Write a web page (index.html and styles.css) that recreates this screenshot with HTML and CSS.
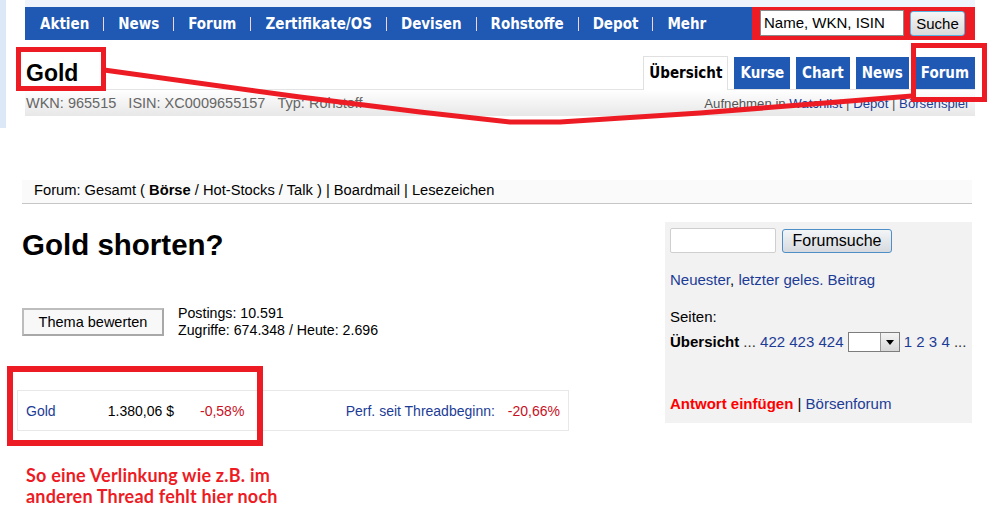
FILE: index.html
```html
<!DOCTYPE html>
<html lang="de">
<head>
<meta charset="utf-8">
<title>Gold shorten? - Forum</title>
<link rel="stylesheet" href="styles.css">
</head>
<body>
<div class="shot">
  <div class="site">
    <div class="topstrip"></div>
    <div class="nav">
      <div class="menu">
        <a>Aktien</a><span class="sep"></span>
        <a>News</a><span class="sep"></span>
        <a>Forum</a><span class="sep"></span>
        <a>Zertifikate/OS</a><span class="sep"></span>
        <a>Devisen</a><span class="sep"></span>
        <a>Rohstoffe</a><span class="sep"></span>
        <a>Depot</a><span class="sep"></span>
        <a>Mehr</a>
      </div>
      <div class="search">
        <span class="q">Name, WKN, ISIN</span>
        <span class="qbtn">Suche</span>
      </div>
    </div>
    <div class="titlerow">
      <h1 class="name">Gold</h1>
      <div class="tabs">
        <span class="tab active">Übersicht</span>
        <span class="tab">Kurse</span>
        <span class="tab">Chart</span>
        <span class="tab">News</span>
        <span class="tab">Forum</span>
      </div>
    </div>
    <div class="inforow">
      <span class="ids">WKN: 965515&nbsp;&nbsp;&nbsp;ISIN: XC0009655157&nbsp;&nbsp;&nbsp;Typ: Rohstoff</span>
      <span class="watch">Aufnehmen in <a>Watchlist</a> | <a>Depot</a> | <a>Börsenspiel</a></span>
    </div>
  </div>
</div>

<div class="page">
  <div class="crumbs">Forum: Gesamt ( <b>Börse</b> / Hot-Stocks / Talk ) | Boardmail | Lesezeichen</div>
  <div class="main">
    <div class="left">
      <h2 class="thread">Gold shorten?</h2>
      <div class="statsrow">
        <span class="rate">Thema bewerten</span>
        <div class="stats">
          <div>Postings: 10.591</div>
          <div>Zugriffe: 674.348 / Heute: 2.696</div>
        </div>
      </div>
      <div class="stock">
        <a class="sname">Gold</a>
        <span class="sprice">1.380,06 $</span>
        <span class="schg">-0,58%</span>
        <a class="perf">Perf. seit Threadbeginn:</a>
        <span class="perfval">-20,66%</span>
      </div>
      <p class="note">So eine Verlinkung wie z.B. im<br>anderen Thread fehlt hier noch</p>
    </div>
    <div class="side">
      <div class="fsearch">
        <span class="finput"></span>
        <span class="fbtn">Forumsuche</span>
      </div>
      <p class="sline first"><a>Neuester</a>, <a>letzter geles. Beitrag</a></p>
      <p class="sline seiten">Seiten:</p>
      <div class="pages"><b>Übersicht</b> <span class="dots">...</span> <a>422</a> <a>423</a> <a>424</a> <span class="sel"><span class="selarrow"><span class="tri"></span></span></span> <a>1</a> <a>2</a> <a>3</a> <a>4</a> <span class="dots">...</span></div>
      <p class="sline answer"><b class="reply">Antwort einfügen</b> | <a>Börsenforum</a></p>
    </div>
  </div>
</div>

<svg class="marks" width="988" height="515" viewBox="0 0 988 515">
  <rect x="18.5" y="49.5" width="85" height="39" fill="none" stroke="#ed1c24" stroke-width="5"/>
  <rect x="913.5" y="45.5" width="71" height="54" fill="none" stroke="#ed1c24" stroke-width="5"/>
  <rect x="10" y="369" width="250" height="74" fill="none" stroke="#ed1c24" stroke-width="6"/>
  <polyline points="104,70 300,97 420,112 510,122 560,122 700,113 800,105 912,96" fill="none" stroke="#ed1c24" stroke-width="5" stroke-linejoin="round"/>
</svg>
</body>
</html>
```
FILE: styles.css
```css
html, body {
  margin: 0;
  padding: 0;
}
body {
  width: 988px;
  height: 515px;
  overflow: hidden;
  position: relative;
  background: #fff;
  font-family: "Liberation Sans", Arial, sans-serif;
  color: #000;
}
a { color: #1c3c96; text-decoration: none; }

/* ---------- header screenshot ---------- */
.shot {
  height: 128px;
  border-left: 6px solid #dde8f6;
  padding-left: 19px;
}
.site { width: 950px; }
.topstrip { height: 7px; background: #eef3fc; }
.nav {
  height: 33px;
  background: #1f59b3;
  display: flex;
  align-items: center;
  padding-left: 15px;
}
.menu {
  display: flex;
  align-items: center;
  font-family: "DejaVu Sans Condensed", "DejaVu Sans", sans-serif;
  font-stretch: condensed;
  font-weight: bold;
  font-size: 15px;
}
.menu a { color: #fff; }
.sep {
  width: 1px;
  height: 14px;
  background: #f2d6dc;
  margin: 0 14px;
}
.search {
  margin-left: auto;
  width: 223px;
  height: 33px;
  background: #ed1c24;
  display: flex;
  align-items: center;
  padding-left: 8px;
  box-sizing: border-box;
}
.q {
  width: 144px;
  height: 26px;
  box-sizing: border-box;
  border: 1px solid #8a8a8a;
  background: #fff;
  font-size: 15px;
  line-height: 24px;
  padding-left: 3px;
  margin-top: -1px;
}
.qbtn {
  margin-left: 6px;
  width: 55px;
  height: 25px;
  box-sizing: border-box;
  border: 1px solid #58b2e2;
  border-radius: 3px;
  background: linear-gradient(#f6f6f6, #dadada);
  font-size: 15px;
  line-height: 23px;
  text-align: center;
}
.titlerow {
  height: 49px;
  border-bottom: 1px solid #e4e4e4;
  display: flex;
}
.name {
  margin: 20px 0 0 1px;
  font-size: 23px;
  line-height: 26px;
  font-weight: bold;
}
.tabs {
  margin-left: auto;
  align-self: flex-end;
  display: flex;
  gap: 6px;
  margin-bottom: -1px;
}
.tab {
  height: 32px;
  line-height: 32px;
  padding: 0 6px;
  background: #1f59b3;
  color: #fff;
  font-family: "DejaVu Sans Condensed", "DejaVu Sans", sans-serif;
  font-stretch: condensed;
  font-weight: bold;
  font-size: 15px;
}
.tab.active {
  background: #fff;
  color: #000;
  border: 1px solid #e0e0e0;
  border-bottom: none;
  height: 33px;
  line-height: 33px;
  margin-top: -1px;
  padding: 0 5px;
}
.inforow {
  height: 26px;
  background: linear-gradient(#ffffff, #e7e7e7);
  display: flex;
  justify-content: space-between;
  align-items: baseline;
  font-size: 14.5px;
  line-height: 26px;
  color: #666;
  padding: 0 7px 0 1px;
}
.watch { color: #555; font-size: 13.2px; }

/* ---------- forum page ---------- */
.page {
  padding: 0 16px 0 22px;
}
.crumbs {
  margin-top: 52px;
  height: 23px;
  background: #fafafa;
  border-bottom: 1px solid #c6c6c6;
  padding-left: 12px;
  font-size: 14.7px;
  line-height: 20px;
}
.main {
  display: flex;
}
.left {
  width: 547px;
}
.thread {
  margin: 24px 0 0;
  font-size: 29.5px;
  line-height: 34px;
  font-weight: bold;
}
.statsrow {
  margin-top: 43px;
  display: flex;
  align-items: flex-start;
}
.rate {
  margin-top: 3px;
  width: 142px;
  height: 28px;
  box-sizing: border-box;
  border: 2px solid #a8a8a8;
  border-top-color: #bdbdbd;
  border-left-color: #bdbdbd;
  background: #f8f8f8;
  font-size: 14.5px;
  line-height: 24px;
  text-align: center;
}
.stats {
  margin-left: 14px;
  font-size: 14.2px;
  line-height: 17px;
}
.stock {
  margin: 51px 0 0 -5px;
  width: 552px;
  height: 41px;
  box-sizing: border-box;
  border: 1px solid #e8e8e8;
  display: flex;
  align-items: center;
  font-size: 14px;
  padding: 0 8px;
}
.sname { width: 60px; }
.sprice { width: 88px; text-align: right; }
.schg { margin-left: 26px; color: #c8101e; }
.perf { margin-left: auto; }
.perfval { margin-left: 13px; color: #c8101e; }
.note {
  margin: 34px 0 0 4px;
  font-family: Lato, "Open Sans", sans-serif;
  font-weight: bold;
  font-size: 18px;
  letter-spacing: 0.2px;
  line-height: 21px;
  color: #ed1c24;
}

.side {
  margin: 18px 0 0 auto;
  width: 307px;
  height: 201px;
  box-sizing: border-box;
  background: #f2f2f2;
  padding: 6px 0 0 5px;
  font-size: 15px;
}
.fsearch {
  display: flex;
  align-items: flex-start;
}
.finput {
  width: 106px;
  height: 25px;
  box-sizing: border-box;
  border: 1px solid #cfcfcf;
  border-radius: 2px;
  background: #fff;
}
.fbtn {
  margin: 1px 0 0 6px;
  width: 110px;
  height: 24px;
  box-sizing: border-box;
  border: 1px solid #4d8fc6;
  border-radius: 3px;
  background: linear-gradient(#f3f5f7, #d6dade);
  font-size: 16px;
  line-height: 22px;
  text-align: center;
}
.sline {
  margin: 0;
  line-height: 18px;
}
.sline.first { margin-top: 18px; }
.sline.seiten { margin-top: 19px; }
.pages {
  margin-top: 5px;
  height: 22px;
  line-height: 22px;
}
.dots { color: #333; }
.sel {
  display: inline-flex;
  vertical-align: top;
  margin-top: 1px;
  width: 52px;
  height: 20px;
  box-sizing: border-box;
  border: 1px solid #7d7d7d;
  background: #fff;
  justify-content: flex-end;
}
.selarrow {
  width: 19px;
  height: 18px;
  box-sizing: border-box;
  border-left: 1px solid #9a9a9a;
  background: linear-gradient(#f4f4f4, #d8d8d8);
  display: flex;
  align-items: center;
  justify-content: center;
}
.tri {
  width: 0;
  height: 0;
  border-left: 4px solid transparent;
  border-right: 4px solid transparent;
  border-top: 5px solid #000;
}
.sline.answer { margin-top: 42px; }
.reply { color: #ff0000; }

.marks {
  position: absolute;
  left: 0;
  top: 0;
  pointer-events: none;
}
```
